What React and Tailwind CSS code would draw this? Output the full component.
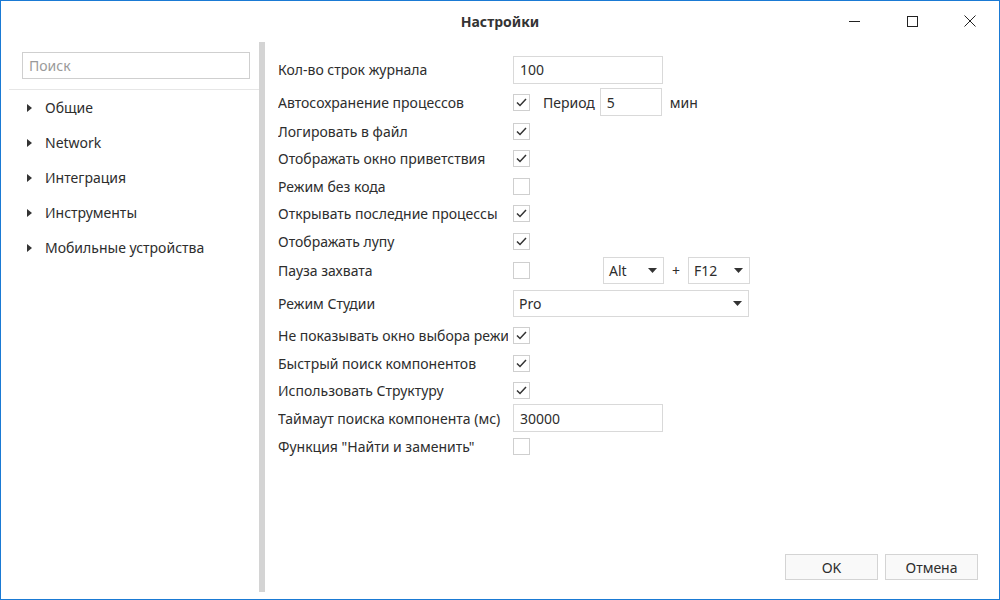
import React from 'react';

const font = { fontFamily: '"Noto Sans", "Open Sans", sans-serif' };

const Check = ({ checked }) => (
  <div className="w-[17px] h-[17px] border border-[#cfcfcf] bg-white flex items-center justify-center">
    {checked && (
      <svg width="11" height="9" viewBox="0 0 11 9">
        <path d="M1 4.5 L4 7.5 L10 1" fill="none" stroke="#333" strokeWidth="1.5" />
      </svg>
    )}
  </div>
);

const Arrow = () => (
  <svg width="9" height="5" viewBox="0 0 9 5">
    <path d="M0 0 L9 0 L4.5 5 Z" fill="#333" />
  </svg>
);

const TextBox = ({ value, w = 'w-[150px]' }) => (
  <div className={`${w} h-[28px] border border-[#d9d9d9] bg-white flex items-center px-[6px]`}>{value}</div>
);

const Select = ({ value, w }) => (
  <div className={`${w} h-[27px] border border-[#d9d9d9] bg-white flex items-center justify-between pl-[5px] pr-[6px]`}>
    <span>{value}</span>
    <Arrow />
  </div>
);

const Row = ({ label, h, children }) => (
  <div className={`flex items-center ${h}`}>
    <div className="w-[230px] mr-[5px] overflow-hidden whitespace-nowrap">{label}</div>
    <div className="flex items-center">{children}</div>
  </div>
);

const tree = ['Общие', 'Network', 'Интеграция', 'Инструменты', 'Мобильные устройства'];

const App = () => {
  return (
    <div
      className="w-[1000px] h-[600px] border border-[#1a7ad4] bg-white flex flex-col text-[14px] text-[#2d2d2d] overflow-hidden"
      style={font}
    >
      {/* title bar */}
      <div className="h-[41px] flex items-center relative shrink-0">
        <div className="flex-1 text-center font-bold text-[14px] text-[#333]">Настройки</div>
        <div className="absolute right-0 top-0 h-[40px] flex items-center">
          <div className="w-[58px] flex justify-center">
            <svg width="11" height="11" viewBox="0 0 11 11"><path d="M0 5.5 H11" stroke="#222" strokeWidth="1" /></svg>
          </div>
          <div className="w-[58px] flex justify-center">
            <svg width="11" height="11" viewBox="0 0 11 11"><rect x="0.5" y="0.5" width="10" height="10" fill="none" stroke="#222" strokeWidth="1" /></svg>
          </div>
          <div className="w-[58px] flex justify-center">
            <svg width="12" height="12" viewBox="0 0 12 12"><path d="M0.5 0.5 L11.5 11.5 M11.5 0.5 L0.5 11.5" stroke="#222" strokeWidth="1" /></svg>
          </div>
        </div>
      </div>

      <div className="flex flex-1 min-h-0">
        {/* left tree */}
        <div className="w-[258px] shrink-0 pt-[10px]">
          <div className="ml-[21px] w-[228px] h-[27px] border border-[#cfcfcf] flex items-center px-[6px] text-[#9a9a9a]">
            Поиск
          </div>
          <div className="ml-[8px] mt-[10px] h-px bg-[#e6e6e6]" />
          <div>
            {tree.map((t) => (
              <div key={t} className="h-[35px] flex items-center">
                <svg className="ml-[26px]" width="5" height="8" viewBox="0 0 5 8"><path d="M0 0 L5 4 L0 8 Z" fill="#333" /></svg>
                <span className="ml-[13px]">{t}</span>
              </div>
            ))}
          </div>
        </div>

        {/* splitter */}
        <div className="w-[6px] bg-[#d4d4d4] shrink-0 mb-[7px]" />

        {/* settings */}
        <div className="flex-1 flex flex-col pl-[13px] pt-[11px]">
          <Row label="Кол-во строк журнала" h="h-[33px]"><TextBox value="100" /></Row>
          <Row label="Автосохранение процессов" h="h-[32px]">
            <Check checked />
            <span className="ml-[13px] mr-[5px]">Период</span>
            <TextBox value="5" w="w-[62px]" />
            <span className="ml-[8px]">мин</span>
          </Row>
          <Row label="Логировать в файл" h="h-[27px]"><Check checked /></Row>
          <Row label="Отображать окно приветствия" h="h-[27px]"><Check checked /></Row>
          <Row label="Режим без кода" h="h-[28px]"><Check /></Row>
          <Row label="Открывать последние процессы" h="h-[27px]"><Check checked /></Row>
          <Row label="Отображать лупу" h="h-[28px]"><Check checked /></Row>
          <Row label="Пауза захвата" h="h-[31px]">
            <Check />
            <div className="ml-[73px]"><Select value="Alt" w="w-[61px]" /></div>
            <span className="mx-[8px]">+</span>
            <Select value="F12" w="w-[62px]" />
          </Row>
          <Row label="Режим Студии" h="h-[34px]"><Select value="Pro" w="w-[236px]" /></Row>
          <Row label="Не показывать окно выбора режима" h="h-[30px]"><Check checked /></Row>
          <Row label="Быстрый поиск компонентов" h="h-[27px]"><Check checked /></Row>
          <Row label="Использовать Структуру" h="h-[27px]"><Check checked /></Row>
          <Row label="Таймаут поиска компонента (мс)" h="h-[28px]"><TextBox value="30000" /></Row>
          <Row label='Функция "Найти и заменить"' h="h-[28px]"><Check /></Row>

          <div className="flex-1" />
          <div className="flex justify-end gap-[7px] pr-[21px] pb-[19px]">
            <div className="w-[93px] h-[26px] border border-[#d4d4d4] bg-[#f9f9f9] flex items-center justify-center">OK</div>
            <div className="w-[93px] h-[26px] border border-[#d4d4d4] bg-[#f9f9f9] flex items-center justify-center">Отмена</div>
          </div>
        </div>
      </div>
    </div>
  );
};

export default App;
